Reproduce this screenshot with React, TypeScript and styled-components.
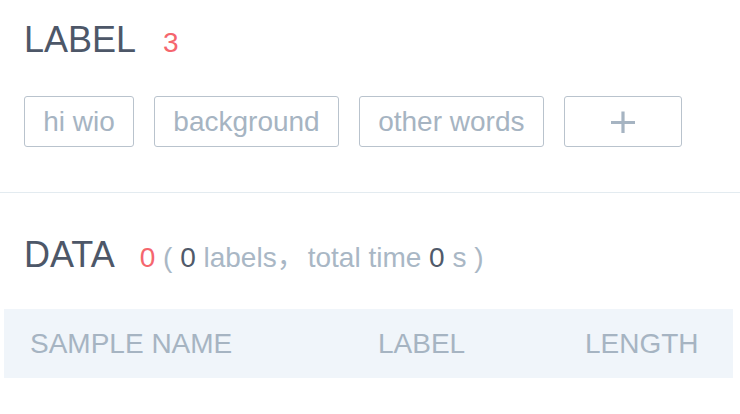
import React from "react";
import styled, { createGlobalStyle } from "styled-components";

const GlobalStyle = createGlobalStyle`
  html, body {
    margin: 0;
    padding: 0;
    background: #ffffff;
  }
  body {
    font-family: "Liberation Sans", "Noto Sans CJK SC", Arial, sans-serif;
  }
`;

const Page = styled.div`
  width: 740px;
  height: 414px;
  overflow: hidden;
  background: #ffffff;
  display: flex;
  flex-direction: column;
`;

const Section = styled.section<{ $top: number }>`
  padding: ${(p) => p.$top}px 0 0 24px;
  display: flex;
  flex-direction: column;
`;

const TitleRow = styled.div`
  display: flex;
  align-items: baseline;
  height: 44px;
  line-height: 44px;
`;

const Title = styled.h2`
  margin: 0;
  font-size: 36px;
  font-weight: normal;
  color: #4d5768;
  line-height: 44px;
`;

const Count = styled.span<{ $gap: number }>`
  margin-left: ${(p) => p.$gap}px;
  font-size: 28px;
  color: #f5666e;
`;

const Meta = styled.span`
  font-size: 28px;
  color: #a9b7c5;
  white-space: pre;
`;

const Dark = styled.span`
  color: #505a6a;
`;

const Comma = styled.span`
  margin-right: 3px;
`;

const TagRow = styled.div`
  display: flex;
  gap: 20px;
  margin-top: 34px;
`;

const Tag = styled.div<{ $width?: number }>`
  box-sizing: border-box;
  height: 51px;
  ${(p) => (p.$width ? `width: ${p.$width}px;` : "padding: 0 18.25px;")}
  border: 1px solid #b9c3cd;
  border-radius: 3px;
  display: flex;
  align-items: center;
  justify-content: center;
  font-size: 28px;
  color: #a6b4c2;
  white-space: nowrap;
`;

const Divider = styled.div`
  height: 1px;
  background: #e3ebf0;
  margin-top: 45px;
`;

const TableHead = styled.div`
  margin: 32px 0 0 4px;
  width: 729px;
  height: 69px;
  background: #f0f5fa;
  display: grid;
  grid-template-columns: 348px 207px 1fr;
  align-items: center;
`;

const HeadCell = styled.div`
  padding-left: 26px;
  font-size: 28px;
  color: #a6b4c2;
  white-space: nowrap;
`;

const PlusIcon = () => (
  <svg width="26" height="24" viewBox="0 0 26 24" fill="none">
    <path d="M1 12.5H25M13 1.5V23" stroke="#a6b4c2" strokeWidth="3.2" />
  </svg>
);

const tags = ["hi wio", "background", "other words"];

export default function App() {
  return (
    <Page>
      <GlobalStyle />
      <Section $top={18}>
        <TitleRow>
          <Title>LABEL</Title>
          <Count $gap={27}>3</Count>
        </TitleRow>
        <TagRow>
          {tags.map((t) => (
            <Tag key={t}>{t}</Tag>
          ))}
          <Tag $width={118}>
            <PlusIcon />
          </Tag>
        </TagRow>
      </Section>
      <Divider />
      <Section $top={40}>
        <TitleRow>
          <Title>DATA</Title>
          <Count $gap={25}>0</Count>
          <Meta>
            {" ( "}
            <Dark>0</Dark>
            {" labels"}
            <Comma>，</Comma>
            {"total time "}
            <Dark>0</Dark>
            {" s )"}
          </Meta>
        </TitleRow>
      </Section>
      <TableHead>
        <HeadCell>SAMPLE NAME</HeadCell>
        <HeadCell>LABEL</HeadCell>
        <HeadCell>LENGTH</HeadCell>
      </TableHead>
    </Page>
  );
}
